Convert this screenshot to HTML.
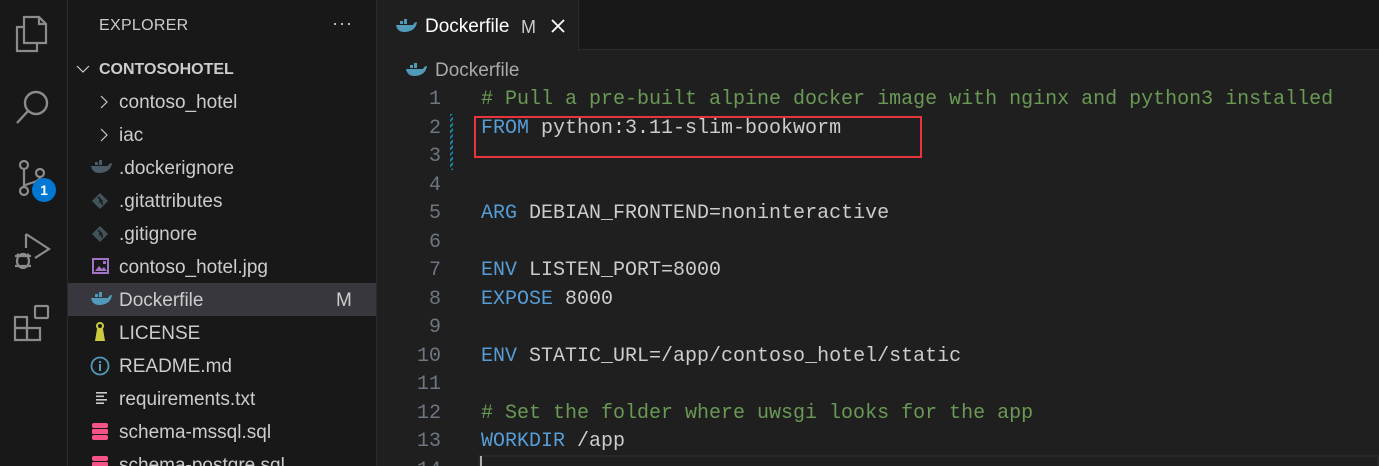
<!DOCTYPE html>
<html style="width:1379px;height:466px;overflow:hidden"><head><meta charset="utf-8"><style>
*{margin:0;padding:0;box-sizing:border-box}
body{width:1379px;height:466px;overflow:hidden;background:#1f1f1f;font-family:"Liberation Sans",sans-serif;position:relative}
#act{position:absolute;left:0;top:0;width:68px;height:466px;background:#181818;border-right:1px solid #2b2b2b}
#side{position:absolute;left:68px;top:0;width:309px;height:466px;background:#181818;border-right:1px solid #2b2b2b;overflow:hidden}
.t{position:absolute;white-space:nowrap}
.row{position:absolute;left:0;width:308px;height:33px;font-size:19px;color:#cccccc;line-height:35px}
.row span.n{position:absolute;left:51px}
.row .ic{position:absolute;left:22px;top:7px}
#tabs{position:absolute;left:377px;top:0;width:1002px;height:50px;background:#181818;border-bottom:1px solid #2b2b2b}
#tab{position:absolute;left:0;top:0;width:202px;height:51px;background:#1f1f1f;border-right:1px solid #2b2b2b}
.ln{position:absolute;left:377px;width:64px;text-align:right;font-family:"Liberation Mono",monospace;font-size:20px;color:#6e7681;line-height:28.5px;height:28.5px}
.cd{position:absolute;left:481px;font-family:"Liberation Mono",monospace;font-size:20px;color:#cccccc;line-height:28.5px;white-space:pre}
.k{color:#569cd6}.c{color:#6a9955}
</style></head><body>
<div id="act">
<svg class="t" style="left:14px;top:14px" width="36" height="40" viewBox="0 0 36 40" fill="none" stroke="#8b8b8b" stroke-width="2.2"><path d="M10 3h15l7 7v19H10z M25 3v7h7"/><path d="M10 13H3v24h20v-8"/></svg>
<svg class="t" style="left:14px;top:88px" width="38" height="38" viewBox="0 0 38 38" fill="none" stroke="#8b8b8b" stroke-width="2.4"><circle cx="22" cy="15" r="11"/><path d="M14 23L3 35"/></svg>
<svg class="t" style="left:15px;top:158px" width="36" height="40" viewBox="0 0 36 40" fill="none" stroke="#8b8b8b" stroke-width="2.2"><circle cx="9" cy="7" r="4"/><circle cx="9" cy="33" r="4"/><circle cx="25" cy="15" r="4"/><path d="M9 11v18M25 19c0 6-16 6-16 10"/></svg>
<div class="t" style="left:32px;top:178px;width:24px;height:24px;border-radius:12px;background:#0078d4;color:#fff;font-size:14px;font-weight:bold;text-align:center;line-height:24px">1</div>
<svg class="t" style="left:13px;top:232px" width="40" height="40" viewBox="0 0 40 40" fill="none" stroke="#8b8b8b" stroke-width="2.2"><path d="M13 2l23 15-14 9"/><path d="M13 2v14"/><ellipse cx="10" cy="29" rx="6" ry="7"/><path d="M2 24h16M2 34h16M4 22l3 2M16 22l-3 2"/></svg>
<svg class="t" style="left:13px;top:304px" width="38" height="38" viewBox="0 0 38 38" fill="none" stroke="#8b8b8b" stroke-width="2.2"><rect x="2" y="13" width="12" height="11"/><rect x="2" y="24" width="12" height="12"/><rect x="14" y="24" width="13" height="12"/><rect x="22" y="2" width="13" height="12" rx="1"/></svg>
</div>
<div id="side">
<div class="t" style="left:31px;top:17px;font-size:16px;color:#cccccc;letter-spacing:0.3px">EXPLORER</div>
<div class="t" style="left:264px;top:13px;font-size:18px;color:#cccccc;letter-spacing:1px">···</div>
<svg class="t" style="left:7px;top:63px" width="16" height="12" viewBox="0 0 16 12" fill="none" stroke="#cccccc" stroke-width="1.2"><path d="M2 3l6 6 6-6"/></svg>
<div class="t" style="left:31px;top:60px;font-size:16px;font-weight:bold;color:#cccccc;line-height:20px">CONTOSOHOTEL</div>
<div class="row" style="top:85px"><svg class="ic" style="left:31px;top:10px" width="10" height="14" viewBox="0 0 10 14" fill="none" stroke="#cccccc" stroke-width="1.2"><path d="M2 1l6 6-6 6"/></svg><span class="n">contoso_hotel</span></div>
<div class="row" style="top:118px"><svg class="ic" style="left:31px;top:10px" width="10" height="14" viewBox="0 0 10 14" fill="none" stroke="#cccccc" stroke-width="1.2"><path d="M2 1l6 6-6 6"/></svg><span class="n">iac</span></div>
<div class="row" style="top:151px"><svg class="ic" style="left:22px;top:9px" width="22" height="14" viewBox="0 0 22 14"><path d="M1 6h17c1-2 2-3 4-3-1 7-6 10-13 10C5 13 2 11 1 6z" fill="#4a5a66"/><rect x="5" y="2" width="3" height="3" fill="#4a5a66"/><rect x="9" y="2" width="3" height="3" fill="#4a5a66"/><rect x="9" y="-1" width="3" height="3" fill="#4a5a66"/></svg><span class="n">.dockerignore</span></div>
<div class="row" style="top:184px"><svg class="ic" style="left:24px;top:9px" width="16" height="16" viewBox="0 0 16 16"><path d="M8 0l8 8-8 8-8-8z" fill="#41535b"/><path d="M6 4l4 4v4M8 6v4" stroke="#181818" stroke-width="1.4" fill="none"/></svg><span class="n">.gitattributes</span></div>
<div class="row" style="top:217px"><svg class="ic" style="left:24px;top:9px" width="16" height="16" viewBox="0 0 16 16"><path d="M8 0l8 8-8 8-8-8z" fill="#41535b"/><path d="M6 4l4 4v4M8 6v4" stroke="#181818" stroke-width="1.4" fill="none"/></svg><span class="n">.gitignore</span></div>
<div class="row" style="top:250px"><svg class="ic" style="left:24px;top:8px" width="17" height="16" viewBox="0 0 17 16"><rect x="1" y="1" width="15" height="14" fill="none" stroke="#a074c4" stroke-width="2"/><path d="M3 13l4-5 3 3 2-2 3 4z" fill="#a074c4"/><rect x="11" y="3" width="3" height="3" fill="#a074c4"/></svg><span class="n">contoso_hotel.jpg</span></div>
<div class="row" style="top:283px;background:#37373d"><svg class="ic" style="left:22px;top:9px" width="22" height="14" viewBox="0 0 22 14"><path d="M1 6h17c1-2 2-3 4-3-1 7-6 10-13 10C5 13 2 11 1 6z" fill="#519aba"/><rect x="5" y="2" width="3" height="3" fill="#519aba"/><rect x="9" y="2" width="3" height="3" fill="#519aba"/><rect x="9" y="-1" width="3" height="3" fill="#519aba"/></svg><span class="n">Dockerfile</span><span style="position:absolute;left:268px;color:#cccccc">M</span></div>
<div class="row" style="top:316px"><svg class="ic" style="left:26px;top:6px" width="12" height="20" viewBox="0 0 12 20"><circle cx="6" cy="4" r="3" fill="none" stroke="#cbcb41" stroke-width="2"/><path d="M3 7h6l2 12H1z" fill="#cbcb41"/></svg><span class="n">LICENSE</span></div>
<div class="row" style="top:349px"><svg class="ic" style="left:22px;top:7px" width="20" height="20" viewBox="0 0 20 20"><circle cx="10" cy="10" r="8.5" fill="none" stroke="#519aba" stroke-width="1.8"/><rect x="9" y="8" width="2" height="7" fill="#519aba"/><rect x="9" y="5" width="2" height="2" fill="#519aba"/></svg><span class="n">README.md</span></div>
<div class="row" style="top:382px"><svg class="ic" style="left:28px;top:10px" width="12" height="12" viewBox="0 0 12 12" fill="#cccccc"><rect y="0" width="11" height="1.6"/><rect y="3.5" width="8" height="1.6"/><rect y="7" width="11" height="1.6"/><rect y="10.4" width="8" height="1.6"/></svg><span class="n">requirements.txt</span></div>
<div class="row" style="top:415px"><svg class="ic" style="left:24px;top:8px" width="16" height="17" viewBox="0 0 16 17" fill="#f55385"><rect y="0" width="16" height="5" rx="2"/><rect y="6" width="16" height="5" rx="1"/><rect y="12" width="16" height="5" rx="2"/></svg><span class="n">schema-mssql.sql</span></div>
<div class="row" style="top:448px"><svg class="ic" style="left:24px;top:8px" width="16" height="17" viewBox="0 0 16 17" fill="#f55385"><rect y="0" width="16" height="5" rx="2"/><rect y="6" width="16" height="5" rx="1"/><rect y="12" width="16" height="5" rx="2"/></svg><span class="n">schema-postgre.sql</span></div>
</div>
<div id="tabs"><div id="tab">
<svg class="t" style="left:18px;top:19px" width="22" height="14" viewBox="0 0 22 14"><path d="M1 6h17c1-2 2-3 4-3-1 7-6 10-13 10C5 13 2 11 1 6z" fill="#519aba"/><rect x="5" y="2" width="3" height="3" fill="#519aba"/><rect x="9" y="2" width="3" height="3" fill="#519aba"/><rect x="9" y="-1" width="3" height="3" fill="#519aba"/></svg>
<div class="t" style="left:48px;top:16px;font-size:19px;color:#ffffff">Dockerfile</div>
<div class="t" style="left:144px;top:17px;font-size:18px;color:#cccccc">M</div>
<svg class="t" style="left:174px;top:19px" width="14" height="14" viewBox="0 0 14 14" stroke="#ffffff" stroke-width="1.8"><path d="M1 1l12 12M13 1L1 13"/></svg>
</div></div>
<svg class="t" style="left:405px;top:63px" width="22" height="14" viewBox="0 0 22 14"><path d="M1 6h17c1-2 2-3 4-3-1 7-6 10-13 10C5 13 2 11 1 6z" fill="#519aba"/><rect x="5" y="2" width="3" height="3" fill="#519aba"/><rect x="9" y="2" width="3" height="3" fill="#519aba"/><rect x="9" y="-1" width="3" height="3" fill="#519aba"/></svg>
<div class="t" style="left:435px;top:60px;font-size:19px;color:#a9a9a9">Dockerfile</div>
<div class="ln" style="top:86px">1</div><div class="ln" style="top:114.5px">2</div><div class="ln" style="top:143px">3</div><div class="ln" style="top:171.5px">4</div><div class="ln" style="top:200px">5</div><div class="ln" style="top:228.5px">6</div><div class="ln" style="top:257px">7</div><div class="ln" style="top:285.5px">8</div><div class="ln" style="top:314px">9</div><div class="ln" style="top:342.5px">10</div><div class="ln" style="top:371px">11</div><div class="ln" style="top:399.5px">12</div><div class="ln" style="top:428px">13</div><div class="ln" style="top:456.5px">14</div>
<div class="t" style="left:450px;top:114px;width:3px;height:56px;background:repeating-linear-gradient(135deg,#1b81a8 0 2px,transparent 2px 4px)"></div>
<div class="cd" style="top:86px"><span class="c"># Pull a pre-built alpine docker image with nginx and python3 installed</span></div>
<div class="cd" style="top:114.5px"><span class="k">FROM</span> python:3.11-slim-bookworm</div>
<div class="cd" style="top:200px"><span class="k">ARG</span> DEBIAN_FRONTEND=noninteractive</div>
<div class="cd" style="top:257px"><span class="k">ENV</span> LISTEN_PORT=8000</div>
<div class="cd" style="top:285.5px"><span class="k">EXPOSE</span> 8000</div>
<div class="cd" style="top:342.5px"><span class="k">ENV</span> STATIC_URL=/app/contoso_hotel/static</div>
<div class="cd" style="top:399.5px"><span class="c"># Set the folder where uwsgi looks for the app</span></div>
<div class="cd" style="top:428px"><span class="k">WORKDIR</span> /app</div>
<div class="t" style="left:478px;top:455px;width:901px;height:11px;border:2px solid #282828;border-bottom:none"></div>
<div class="t" style="left:480px;top:456px;width:2px;height:10px;background:#aeafad"></div>
<div class="t" style="left:474px;top:116px;width:448px;height:42px;border:2px solid #e8343b"></div>
</body></html>
